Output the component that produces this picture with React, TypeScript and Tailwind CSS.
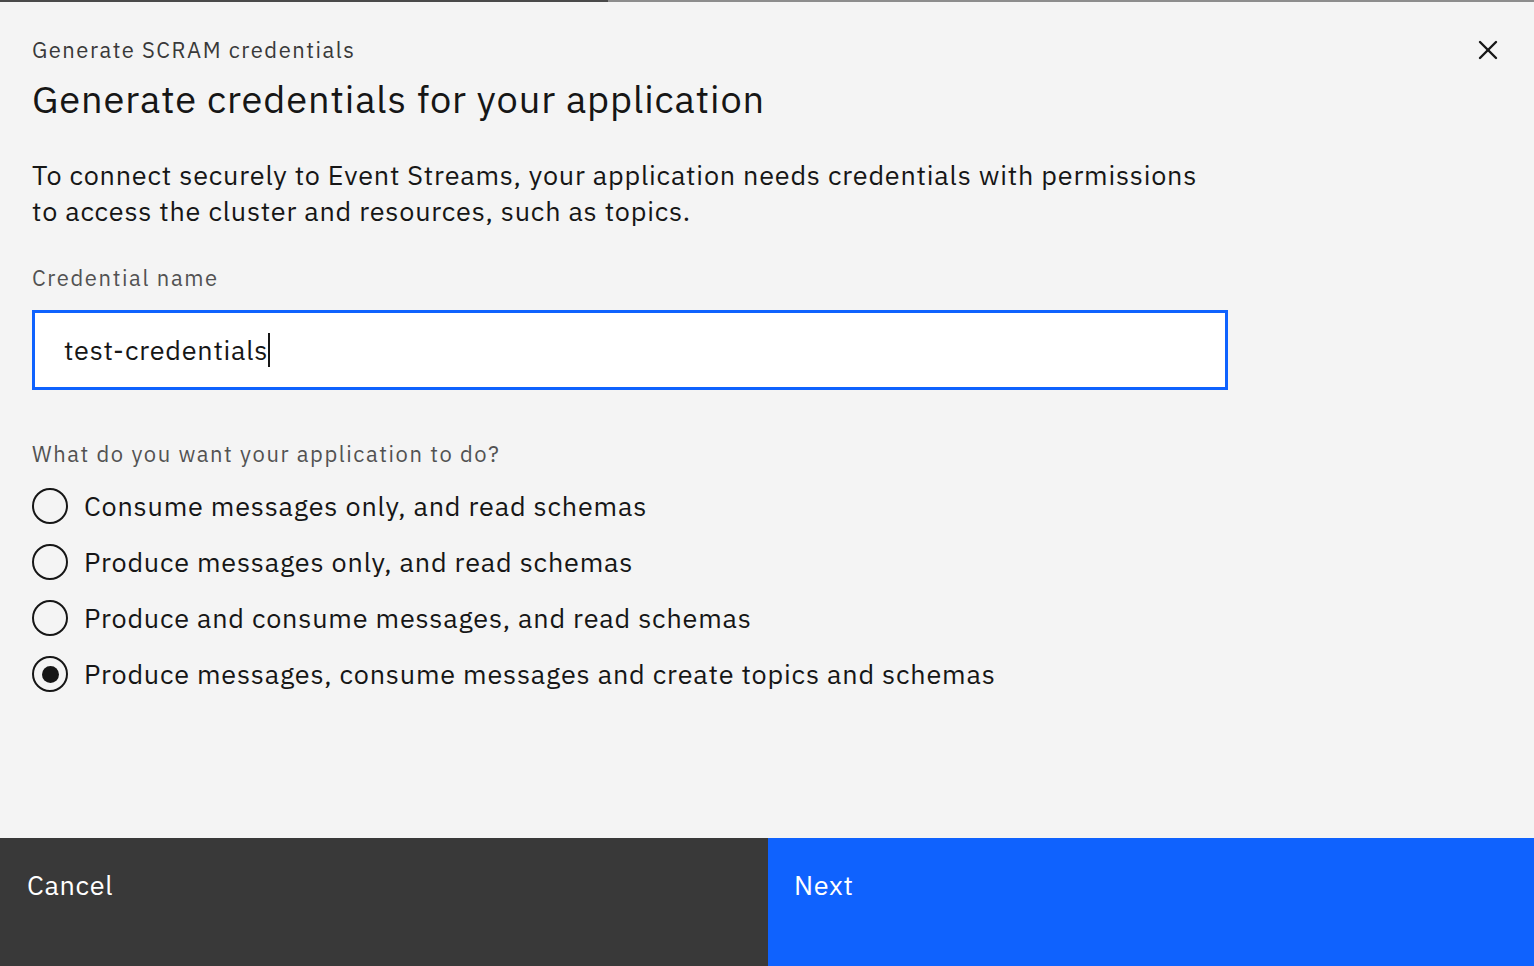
import { X } from 'lucide-react'

const options = [
  'Consume messages only, and read schemas',
  'Produce messages only, and read schemas',
  'Produce and consume messages, and read schemas',
  'Produce messages, consume messages and create topics and schemas',
]

function Radio({ label, checked }: { label: string; checked: boolean }) {
  return (
    <label className="flex items-center h-[56px] gap-[16px] cursor-pointer">
      <span className="w-[36px] h-[36px] rounded-full border-[2px] border-[#161616] flex items-center justify-center shrink-0">
        {checked && <span className="w-[17px] h-[17px] rounded-full bg-[#161616]" />}
      </span>
      <span className="text-[27px] text-[#161616] leading-none tracking-[0.8px] -mt-[2px]">{label}</span>
    </label>
  )
}

export default function App() {
  const selected = 3

  return (
    <div
      className="w-full h-[966px] bg-[#f4f4f4] flex flex-col overflow-hidden"
      style={{ fontFamily: '"IBM Plex Sans", "Noto Sans", Arial, sans-serif' }}
    >
      <div className="flex h-[2px] shrink-0">
        <div className="w-[608px] bg-[#4a4a4a]" />
        <div className="flex-1 bg-[#8d8d8d]" />
      </div>

      <div className="flex-1 flex flex-col pl-[32px] pr-[22px]">
        <div className="flex items-start justify-between pt-[32px]">
          <div className="flex flex-col">
            <span className="text-[22px] leading-[32px] text-[#393939] tracking-[1.5px]">
              Generate SCRAM credentials
            </span>
            <h1 className="text-[38px] leading-[40px] mt-[13px] text-[#161616] tracking-[0.9px]">
              Generate credentials for your application
            </h1>
          </div>
          <button type="button" className="-mt-[8px] w-[48px] h-[48px] flex items-center justify-center text-[#161616]">
            <X size={32} strokeWidth={1.8} />
          </button>
        </div>

        <p className="text-[27px] leading-[36px] text-[#161616] mt-[38px] tracking-[0.78px]">
          To connect securely to Event Streams, your application needs credentials with permissions
          <br />
          to access the cluster and resources, such as topics.
        </p>

        <span className="text-[22px] leading-[32px] text-[#525252] mt-[33px] tracking-[1.6px]">
          Credential name
        </span>

        <div className="mt-[16px] w-[1196px] h-[80px] bg-white border-[3px] border-[#0f62fe] flex items-center pl-[29px]">
          <span className="text-[27px] text-[#161616] leading-none tracking-[0.75px] -mt-[2px]">test-credentials</span>
          <span className="w-[2px] h-[34px] bg-[#161616]" />
        </div>

        <span className="text-[22px] leading-[32px] text-[#525252] mt-[48px] tracking-[1.55px]">
          What do you want your application to do?
        </span>

        <div className="flex flex-col mt-[8px]">
          {options.map((o, i) => (
            <Radio key={o} label={o} checked={i === selected} />
          ))}
        </div>
      </div>

      <div className="flex h-[128px] shrink-0">
        <button type="button" className="w-[768px] bg-[#393939] text-white text-left pl-[27px] pt-[29px] flex items-start">
          <span className="text-[27px] leading-[36px] tracking-[0.7px]">Cancel</span>
        </button>
        <button type="button" className="flex-1 bg-[#0f62fe] text-white text-left pl-[26px] pt-[29px] flex items-start">
          <span className="text-[27px] leading-[36px] tracking-[0.7px]">Next</span>
        </button>
      </div>
    </div>
  )
}
